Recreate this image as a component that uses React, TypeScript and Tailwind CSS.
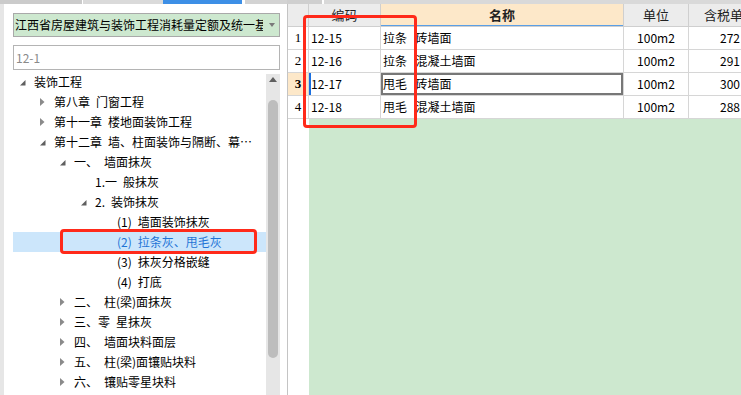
import React from "react";

type Node = {
  level: 0 | 1 | 2 | 3 | 4;
  label: string;
  state: "open" | "closed" | "leaf";
  selected?: boolean;
};

const tree: Node[] = [
  { level: 0, label: "装饰工程", state: "open" },
  { level: 1, label: "第八章\u2002门窗工程", state: "closed" },
  { level: 1, label: "第十一章\u2002楼地面装饰工程", state: "closed" },
  { level: 1, label: "第十二章\u2002墙、柱面装饰与隔断、幕墙工程", state: "open" },
  { level: 2, label: "一、\u2002墙面抹灰", state: "open" },
  { level: 3, label: "1.一\u2002般抹灰", state: "leaf" },
  { level: 3, label: "2.\u2002装饰抹灰", state: "open" },
  { level: 4, label: "(1)\u2002墙面装饰抹灰", state: "leaf" },
  { level: 4, label: "(2)\u2002拉条灰、甩毛灰", state: "leaf", selected: true },
  { level: 4, label: "(3)\u2002抹灰分格嵌缝", state: "leaf" },
  { level: 4, label: "(4)\u2002打底", state: "leaf" },
  { level: 2, label: "二、\u2002柱(梁)面抹灰", state: "closed" },
  { level: 2, label: "三、零\u2002星抹灰", state: "closed" },
  { level: 2, label: "四、\u2002墙面块料面层", state: "closed" },
  { level: 2, label: "五、\u2002柱(梁)面镶贴块料", state: "closed" },
  { level: 2, label: "六、\u2002镶贴零星块料", state: "closed" },
];

const indent: Record<number, string> = {
  0: "pl-[7px]",
  1: "pl-[27px]",
  2: "pl-[47px]",
  3: "pl-[68px]",
  4: "pl-[90px]",
};

function Arrow({ state }: { state: Node["state"] }) {
  if (state === "open")
    return (
      <svg width="6" height="6" viewBox="0 0 6 6" className="mt-[2px]">
        <polygon points="5.5,0 5.5,5.5 0,5.5" fill="#5f5f5f" />
      </svg>
    );
  if (state === "closed")
    return (
      <svg width="5" height="8" viewBox="0 0 5 8">
        <polygon points="0,0 4.5,4 0,8" fill="#8a8a8a" />
      </svg>
    );
  return null;
}

const rows = [
  { n: "1", code: "12-15", name: "拉条\u2002\u2009砖墙面", unit: "100m2", price: "272" },
  { n: "2", code: "12-16", name: "拉条\u2002\u2009混凝土墙面", unit: "100m2", price: "291" },
  { n: "3", code: "12-17", name: "甩毛\u2002\u2009砖墙面", unit: "100m2", price: "300" },
  { n: "4", code: "12-18", name: "甩毛\u2002\u2009混凝土墙面", unit: "100m2", price: "288" },
];

export default function App() {
  return (
    <div className="relative flex h-[395px] w-[741px] overflow-hidden bg-white text-[12px] leading-[16px] text-black font-['Noto_Sans_CJK_SC','Noto_Sans',sans-serif]">
      {/* Left panel */}
      <div className="flex w-[287px] shrink-0 flex-col">
        <div className="flex h-[4px] shrink-0">
          <div className="w-[82px] bg-[#cbcbcb]" />
          <div className="w-[1px] bg-white" />
          <div className="w-[80px] bg-[#dadada]" />
          <div className="w-[79px] bg-[#3d8fe6]" />
          <div className="w-[3px] bg-white" />
          <div className="flex-1 bg-[#d3d3d3]" />
        </div>
        <div className="flex min-h-0 flex-1">
          <div className="w-[4px] shrink-0 bg-[#e6e6e6]" />
          <div className="flex min-w-0 flex-1 flex-col pl-[9px] pr-[7px] pt-[9px]">
            <div className="flex h-[24px] shrink-0 items-center border border-[#a9a9a9] bg-[#cde8cf] pl-[1px] pr-[4px]">
              <span className="min-w-0 flex-1 overflow-hidden whitespace-nowrap leading-[20px]">
                江西省房屋建筑与装饰工程消耗量定额及统一基价表
              </span>
              <svg width="6" height="4" viewBox="0 0 6 4" className="ml-[6px] shrink-0">
                <polygon points="0,0 6,0 3,4" fill="#7a7a7a" />
              </svg>
            </div>
            <div className="mt-[8px] flex h-[25px] shrink-0 items-center border border-[#b4b4b4] bg-white pl-[2px] text-[#8a8a8a]">
              12-1
            </div>
            <div className="mt-[2px] flex min-h-0 flex-1">
              <div className="min-w-0 flex-1">
                {tree.map((t, i) => (
                  <div
                    key={i}
                    className={`flex h-[20px] items-center whitespace-nowrap pr-[13px] ${indent[t.level]} ${
                      t.selected ? "bg-[#cce6fb] text-[#1f74d6]" : ""
                    }`}
                  >
                    <span className="flex w-[14px] shrink-0 items-center">
                      <Arrow state={t.state} />
                    </span>
                    <span className="min-w-0 overflow-hidden text-ellipsis whitespace-pre leading-[20px]">{t.label}</span>
                  </div>
                ))}
              </div>
              <div className="mt-[2px] flex w-[14px] shrink-0 flex-col items-center bg-[#e6e6e6]">
                <svg width="8" height="5" viewBox="0 0 8 5" className="mt-[3px]">
                  <polygon points="0,5 8,5 4,0" fill="#5f5f5f" />
                </svg>
                <div className="mt-[18px] h-[258px] w-[10px] rounded-[5px] bg-[#bdbdbd]" />
              </div>
            </div>
          </div>
        </div>
      </div>

      {/* Right panel */}
      <div className="flex min-w-0 flex-1 flex-col">
        <div className="flex h-[4px] shrink-0">
          <div className="w-[35px] bg-[#cfcfcf]" />
          <div className="w-[2px] bg-white" />
          <div className="flex-1 bg-[#d9d9d9]" />
        </div>
        <div className="flex min-h-0 flex-1 flex-col border-l border-[#c4c4c4]">
          {/* header */}
          <div className="flex h-[23px] shrink-0 border-b border-[#cfcfcf] text-[13px] text-[#222]">
            <div className="w-[21px] shrink-0 border-r border-[#cfcfcf] bg-[#ececec]" />
            <div className="flex w-[72px] shrink-0 items-center justify-center border-r border-[#cfcfcf] bg-[#ececec]">
              编码
            </div>
            <div className="flex w-[243px] shrink-0 items-center justify-center border-r border-[#cfcfcf] bg-[#fde8c9] font-bold shadow-[inset_0_-1px_0_#5a9fe6]">
              名称
            </div>
            <div className="flex w-[65px] shrink-0 items-center justify-center border-r border-[#cfcfcf] bg-[#ececec]">
              单位
            </div>
            <div className="flex flex-1 items-center overflow-hidden whitespace-nowrap bg-[#ececec] pl-[15px]">
              含税单价
            </div>
          </div>
          {rows.map((r) => {
            const sel = r.n === "3";
            return (
              <div key={r.n} className="flex h-[23px] shrink-0 border-b border-[#d6d6d6]">
                <div
                  className={`flex w-[21px] shrink-0 items-center justify-center border-r border-[#d6d6d6] font-['Liberation_Serif',serif] text-[13px] ${
                    sel ? "bg-[#fde8c9] font-bold" : "bg-white"
                  }`}
                >
                  {r.n}
                </div>
                <div
                  className={`flex w-[72px] shrink-0 items-center border-r border-[#d6d6d6] pl-[2px] ${
                    sel ? "shadow-[inset_2px_0_0_#1a6fe0]" : ""
                  }`}
                >
                  {r.code}
                </div>
                <div
                  className={`flex w-[243px] shrink-0 items-center whitespace-pre border-r border-[#d6d6d6] pl-[2px] ${
                    sel ? "shadow-[inset_0_0_0_2px_#777777]" : ""
                  }`}
                >
                  {r.name}
                </div>
                <div className="flex w-[65px] shrink-0 items-center justify-center border-r border-[#d6d6d6]">
                  {r.unit}
                </div>
                <div className="flex flex-1 items-center justify-end overflow-hidden whitespace-nowrap pr-[1px]">
                  {r.price}
                </div>
              </div>
            );
          })}
          <div className="flex flex-1">
            <div className="w-[21px] shrink-0 bg-white" />
            <div className="flex-1 bg-[#cde8cf]" />
          </div>
        </div>
      </div>

      {/* annotation boxes */}
      <div className="absolute left-[60px] top-[229px] h-[25px] w-[197px] rounded-[4px] border-[3px] border-[#ff2a1a]" />
      <div className="absolute left-[303px] top-[15px] h-[113px] w-[114px] rounded-[4px] border-[3px] border-[#ff2a1a]" />
    </div>
  );
}
